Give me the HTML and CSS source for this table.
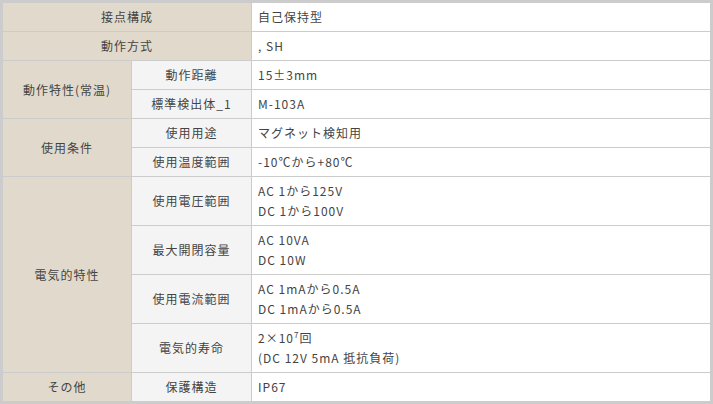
FILE: index.html
```html
<!DOCTYPE html>
<html lang="ja">
<head>
<meta charset="utf-8">
<title>仕様</title>
<link rel="stylesheet" href="styles.css">
</head>
<body>
<table class="spec">
  <colgroup>
    <col class="c1">
    <col class="c2">
    <col class="c3">
  </colgroup>
  <tbody>
    <tr><th class="h1" colspan="2">接点構成</th><td>自己保持型</td></tr>
    <tr><th class="h1" colspan="2">動作方式</th><td>, SH</td></tr>
    <tr><th class="h1" rowspan="2">動作特性(常温)</th><th class="h2">動作距離</th><td>15±3mm</td></tr>
    <tr><th class="h2">標準検出体_1</th><td>M-103A</td></tr>
    <tr><th class="h1" rowspan="2">使用条件</th><th class="h2">使用用途</th><td>マグネット検知用</td></tr>
    <tr><th class="h2">使用温度範囲</th><td>-10℃から+80℃</td></tr>
    <tr><th class="h1" rowspan="4">電気的特性</th><th class="h2">使用電圧範囲</th><td>AC 1から125V<br>DC 1から100V</td></tr>
    <tr><th class="h2">最大開閉容量</th><td>AC 10VA<br>DC 10W</td></tr>
    <tr><th class="h2">使用電流範囲</th><td>AC 1mAから0.5A<br>DC 1mAから0.5A</td></tr>
    <tr><th class="h2">電気的寿命</th><td>2×10<sup>7</sup>回<br>(DC 12V 5mA 抵抗負荷)</td></tr>
    <tr><th class="h1">その他</th><th class="h2">保護構造</th><td>IP67</td></tr>
  </tbody>
</table>
</body>
</html>
```
FILE: styles.css
```css
html, body {
  margin: 0;
  padding: 0;
  background: #ffffff;
}
.spec {
  width: 713px;
  border-collapse: collapse;
  border: 3px solid #cccccc;
  font-family: "Noto Sans CJK JP", "Noto Sans", sans-serif;
  font-size: 12px;
  letter-spacing: 1px;
  color: #444444;
  table-layout: fixed;
}
.c1 { width: 130px; }
.c2 { width: 120px; }
.spec th, .spec td {
  border: 1px solid #cccccc;
  padding: 4px 6px;
  line-height: 20px;
  font-weight: normal;
}
.spec th {
  text-align: center;
}
.spec td {
  text-align: left;
  background: #ffffff;
}
.h1 { background: #e1dacc; }
.h2 { background: #f4f4f4; }
sup {
  font-size: 8px;
  line-height: 1;
}
```
